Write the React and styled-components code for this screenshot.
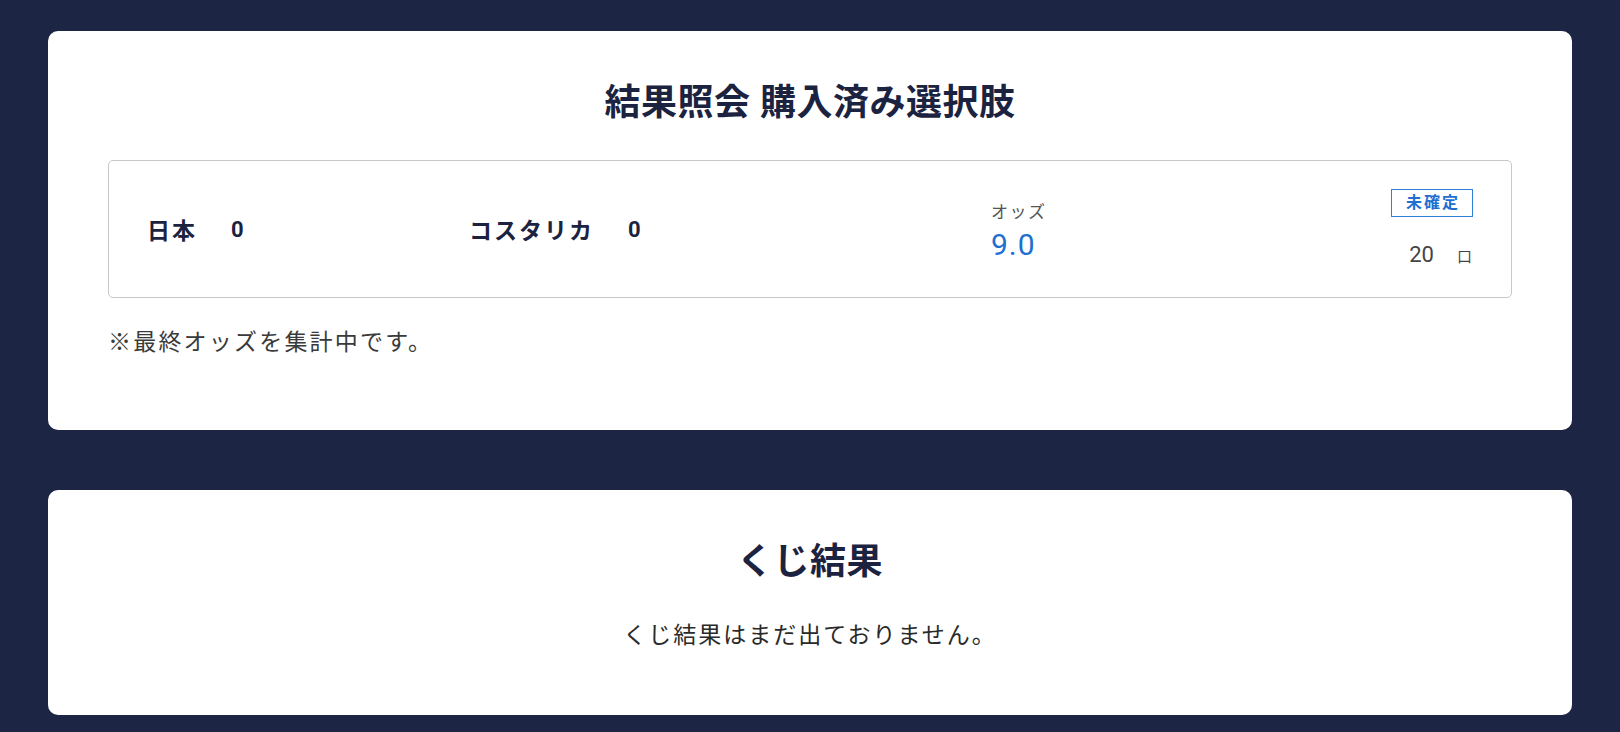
import React from 'react';
import styled, { createGlobalStyle } from 'styled-components';

const GlobalStyle = createGlobalStyle`
  html, body {
    margin: 0;
    padding: 0;
    background-color: #1c2543;
  }
  body {
    font-family: Roboto, "Noto Sans CJK JP", sans-serif;
    color: #1c2340;
  }
`;

const Page = styled.div`
  padding: 31px 48px 17px;
  display: flex;
  flex-direction: column;
  gap: 60px;
`;

const Card = styled.section`
  background-color: #ffffff;
  border-radius: 10px;
  padding: 47px 60px ${(p) => p.bottom}px;
`;

const Title = styled.h2`
  margin: 0;
  font-size: 36px;
  line-height: 50px;
  font-weight: 700;
  text-align: center;
  letter-spacing: 0.5px;
  color: #1c2340;
`;

const PurchaseBox = styled.div`
  margin-top: 32px;
  height: 136px;
  border: 1px solid #c8c8c8;
  border-radius: 5px;
  padding: 0 38px;
  display: grid;
  grid-template-columns: 322px 522px 1fr auto;
  align-items: center;
`;

const Team = styled.div`
  display: flex;
  align-items: center;
  gap: 34px;
  font-size: 23px;
  font-weight: 700;
  letter-spacing: 2px;
`;

const Score = styled.span`
  font-size: 22px;
  font-weight: 700;
`;

const Odds = styled.div`
  display: flex;
  flex-direction: column;
  margin-top: 8px;
`;

const OddsLabel = styled.span`
  font-size: 17px;
  line-height: 20px;
  color: #555555;
  letter-spacing: 1.5px;
`;

const OddsValue = styled.span`
  margin-top: 4px;
  font-size: 30px;
  line-height: 38px;
  font-weight: 400;
  color: #1f6fd1;
  letter-spacing: 1px;
`;

const Status = styled.div`
  display: flex;
  flex-direction: column;
  align-items: flex-end;
  gap: 24px;
  margin-top: 2px;
`;

const Badge = styled.span`
  border: 1px solid #2f7fd8;
  color: #1f6fd1;
  font-size: 16px;
  line-height: 26px;
  font-weight: 700;
  letter-spacing: 2px;
  padding: 0 12px 0 14px;
`;

const Units = styled.div`
  display: flex;
  align-items: baseline;
  gap: 23px;
  color: #444444;
  font-size: 22px;
  line-height: 28px;
  padding-right: 1px;
`;

const UnitLabel = styled.span`
  font-size: 15px;
`;

const Note = styled.p`
  margin: 29px 0 0;
  font-size: 23px;
  line-height: 32px;
  letter-spacing: 2.2px;
  color: #3a3a3a;
`;

const Message = styled.p`
  margin: 33px 0 0;
  text-align: center;
  font-size: 23px;
  line-height: 32px;
  letter-spacing: 2px;
  color: #2a2a2a;
`;

const TeamScore = ({ name, score }) => (
  <Team>
    <span>{name}</span>
    <Score>{score}</Score>
  </Team>
);

export default function App() {
  return (
    <>
      <GlobalStyle />
      <Page>
        <Card bottom={71}>
          <Title>結果照会 購入済み選択肢</Title>
          <PurchaseBox>
            <TeamScore name="日本" score="0" />
            <TeamScore name="コスタリカ" score="0" />
            <Odds>
              <OddsLabel>オッズ</OddsLabel>
              <OddsValue>9.0</OddsValue>
            </Odds>
            <Status>
              <Badge>未確定</Badge>
              <Units>
                <span>20</span>
                <UnitLabel>口</UnitLabel>
              </Units>
            </Status>
          </PurchaseBox>
          <Note>※最終オッズを集計中です。</Note>
        </Card>
        <Card bottom={63}>
          <Title>くじ結果</Title>
          <Message>くじ結果はまだ出ておりません。</Message>
        </Card>
      </Page>
    </>
  );
}
